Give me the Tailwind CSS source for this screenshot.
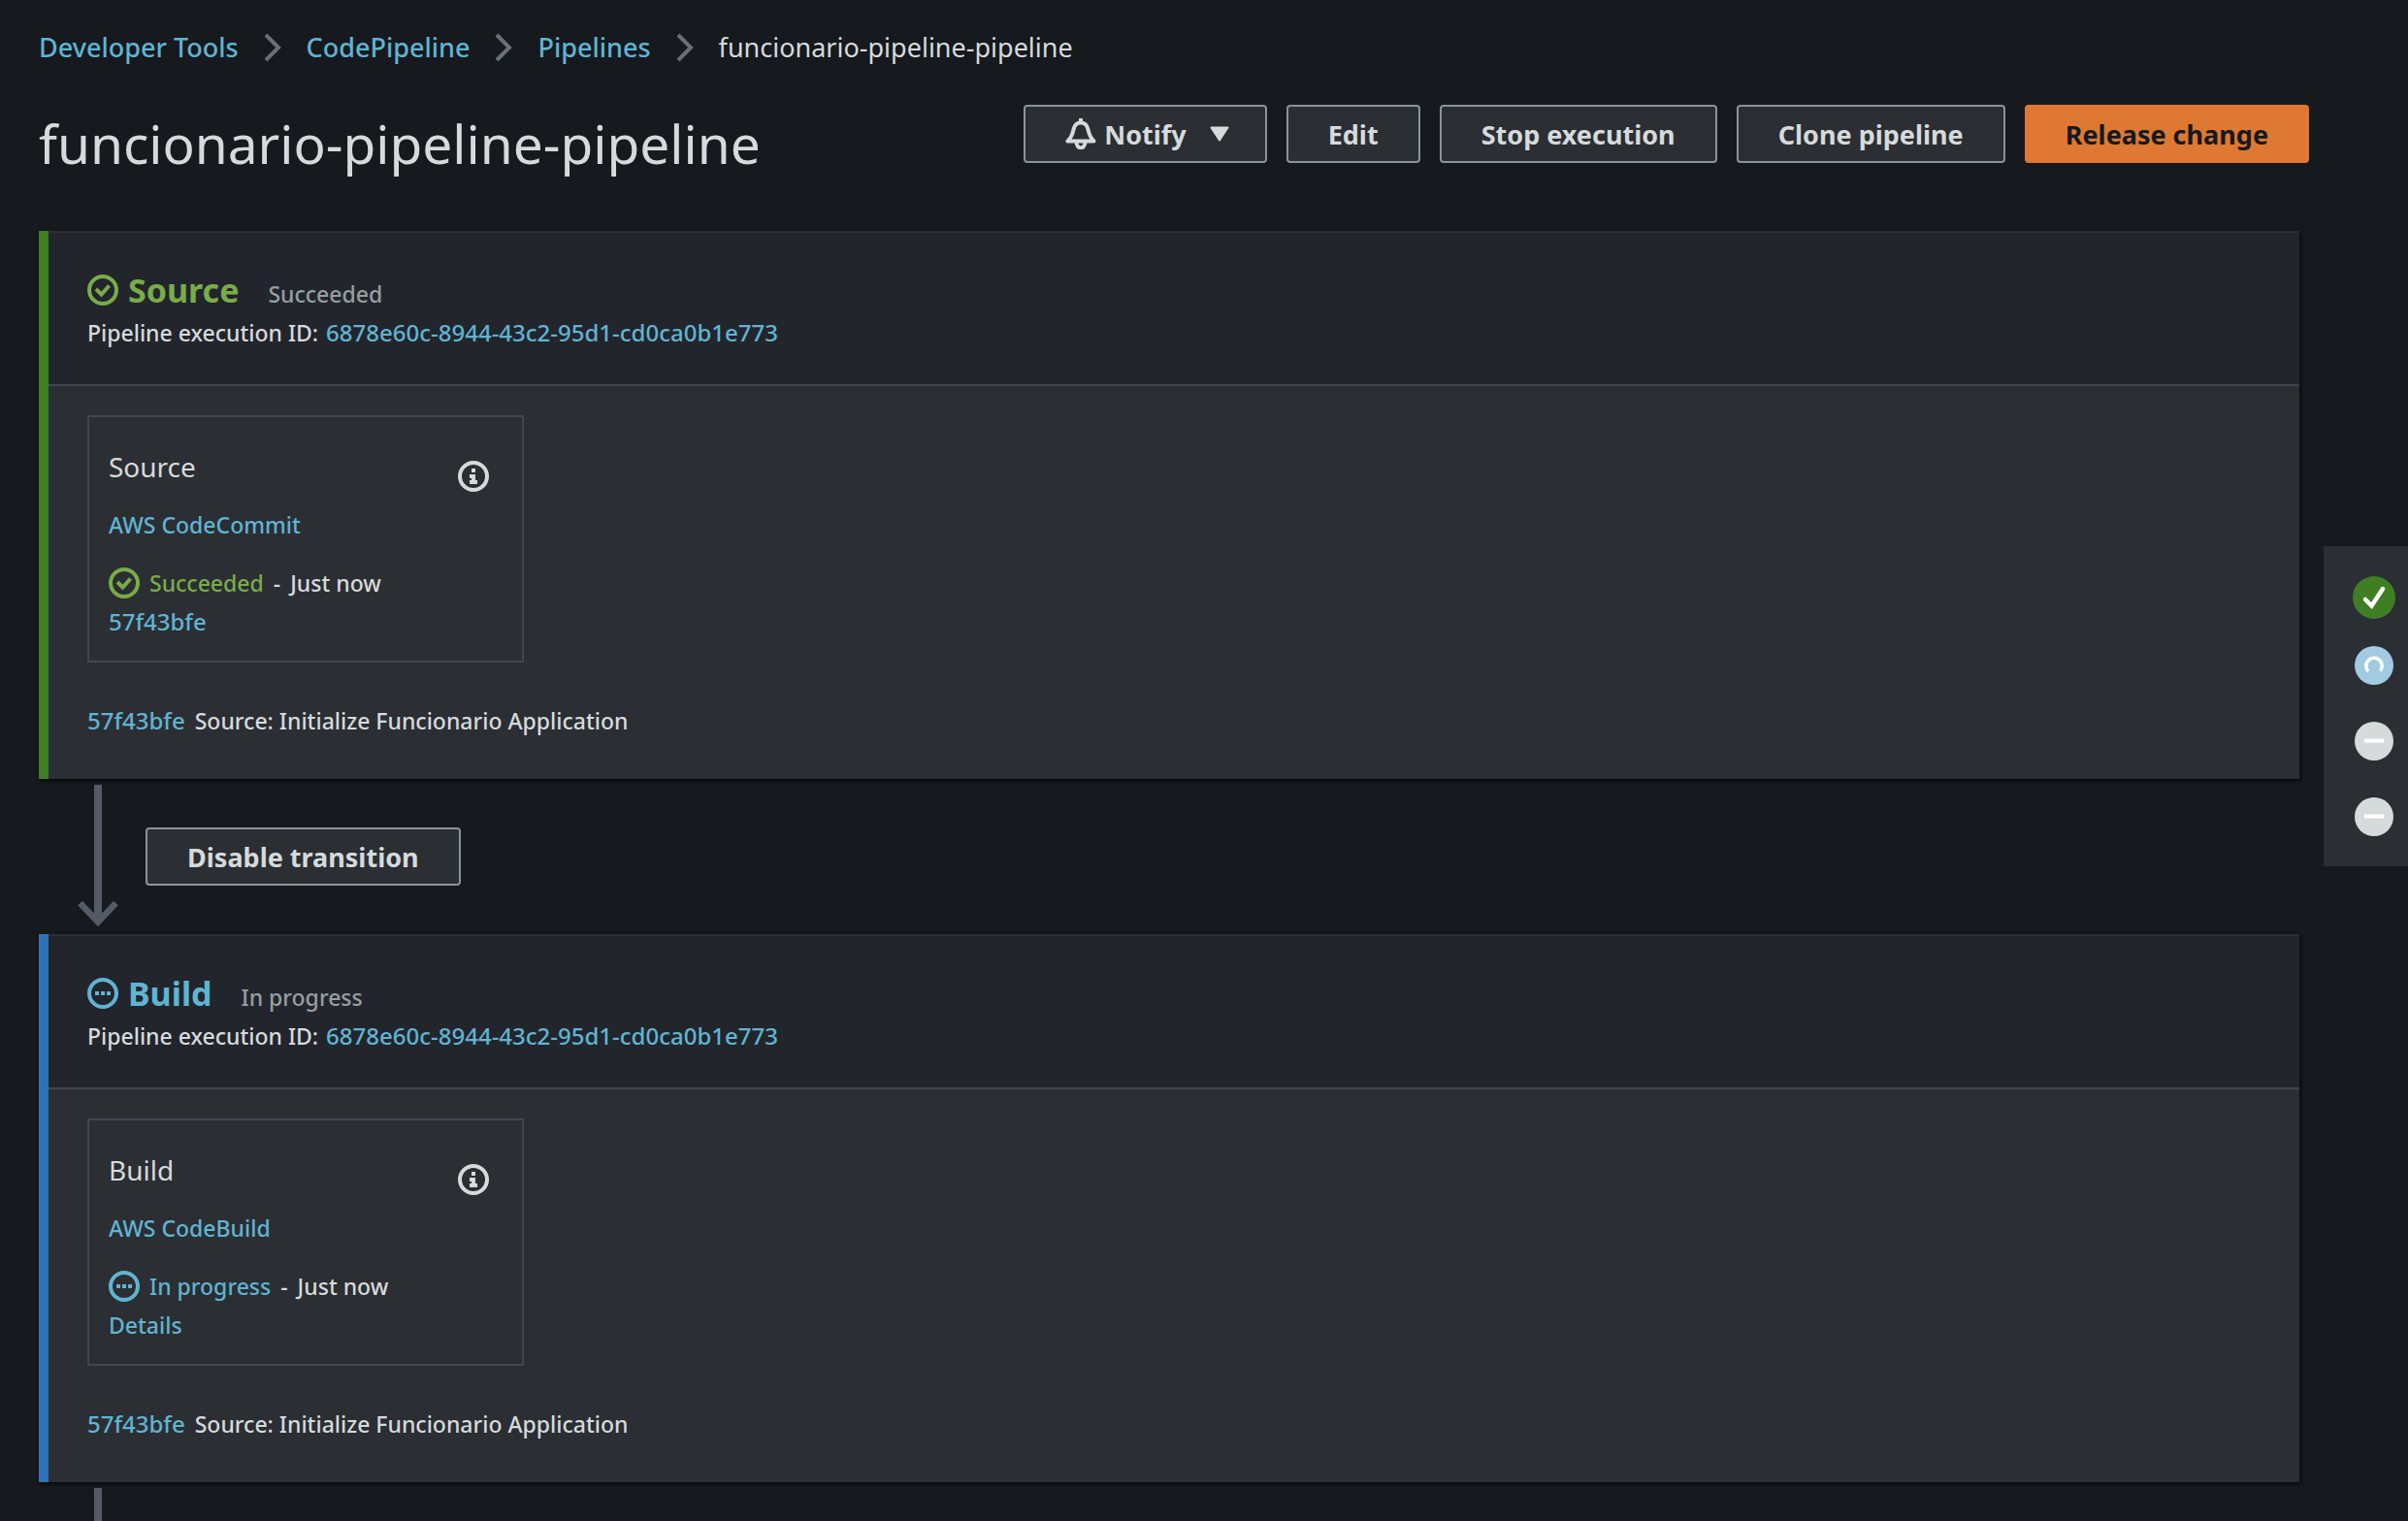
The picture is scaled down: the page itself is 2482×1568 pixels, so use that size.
<!DOCTYPE html>
<html lang="en">
<head>
<meta charset="utf-8">
<meta name="viewport" content="width=device-width, initial-scale=1">
<title>funcionario-pipeline-pipeline | CodePipeline</title>
<script src="https://cdn.jsdelivr.net/npm/@tailwindcss/browser@4"></script>
</head>
<body class="bg-[#16191e] font-['Noto_Sans','Open_Sans',sans-serif] text-[23px] leading-10 font-medium text-[#d5dbdb]">
<svg class="hidden" aria-hidden="true">
  <symbol id="chevron" viewBox="0 0 18 30"><path d="M2 2l13 13L2 28" fill="none" stroke="#687078" stroke-width="4"/></symbol>
  <symbol id="check-circle" viewBox="0 0 32 32"><circle cx="16" cy="16" r="14" fill="none" stroke="currentColor" stroke-width="4"/><path d="M9 15l5.500 5.500L22.500 11.500" fill="none" stroke="currentColor" stroke-width="4"/></symbol>
  <symbol id="progress-circle" viewBox="0 0 32 32"><circle cx="16" cy="16" r="14" fill="none" stroke="currentColor" stroke-width="4"/><path d="M8 14h4v4H8zM14 14h4v4h-4zM20 14h4v4h-4z" fill="currentColor"/></symbol>
  <symbol id="info-circle" viewBox="0 0 32 32"><circle cx="16" cy="16" r="14" fill="none" stroke="currentColor" stroke-width="4"/><path d="M14 8h4v4h-4zM12 14h6v6h2v4h-8v-4h2v-2h-2z" fill="currentColor"/></symbol>
</svg>
<div class="flex min-h-screen flex-col">
  <nav aria-label="Breadcrumb" class="pt-[29px] pl-10">
    <ol class="flex items-center gap-[26px] text-[27px]">
      <li><a href="#" class="text-[#60b4d2]">Developer Tools</a></li>
      <li aria-hidden="true"><svg class="h-[30px] w-[18px]"><use href="#chevron"/></svg></li>
      <li><a href="#" class="text-[#60b4d2]">CodePipeline</a></li>
      <li aria-hidden="true"><svg class="h-[30px] w-[18px]"><use href="#chevron"/></svg></li>
      <li><a href="#" class="text-[#60b4d2]">Pipelines</a></li>
      <li aria-hidden="true"><svg class="h-[30px] w-[18px]"><use href="#chevron"/></svg></li>
      <li aria-current="page" class="font-normal">funcionario-pipeline-pipeline</li>
    </ol>
  </nav>

  <header class="flex items-start justify-between pt-[39px] pr-[102px] pb-[54px] pl-10">
    <h1 class="mt-1 text-[55px] leading-[72px] font-normal">funcionario-pipeline-pipeline</h1>
    <div class="flex gap-5 text-[27px] font-bold">
      <button type="button" class="flex h-[60px] items-center rounded-sm border-2 border-[#879596] bg-[#2b2e33] pr-[37px] pl-[41px]">
        <svg class="size-8" viewBox="0 0 32 32" fill="none" stroke="currentColor" stroke-width="4" stroke-linejoin="round"><path d="M16 0v4"/><path d="M2.500 23.500h27C25 19 24.500 16 23.500 11.500 22.500 7 20 4.500 16 4.500S9.500 7 8.500 11.500C7.500 16 7 19 2.500 23.500z"/><path d="M11.500 24c0 8.500 9 8.500 9 0"/></svg>
        <span class="ml-2 pt-0.5">Notify</span>
        <svg class="ml-6 h-4 w-5" viewBox="0 0 20 16"><path d="M1.500 1.500h17L10 14.500z" fill="currentColor" stroke="currentColor" stroke-width="2" stroke-linejoin="round"/></svg>
      </button>
      <button type="button" class="h-[60px] rounded-sm border-2 border-[#879596] bg-[#2b2e33] px-[41px] pt-0.5">Edit</button>
      <button type="button" class="h-[60px] rounded-sm border-2 border-[#879596] bg-[#2b2e33] px-[41px] pt-0.5">Stop execution</button>
      <button type="button" class="h-[60px] rounded-sm border-2 border-[#879596] bg-[#2b2e33] px-[41px] pt-0.5">Clone pipeline</button>
      <button type="button" class="h-[60px] rounded-sm border-2 border-[#de7832] bg-[#de7832] px-10 pt-0.5 text-[#16191e]">Release change</button>
    </div>
  </header>

  <div class="flex flex-1 gap-[25px] pl-10">
    <main class="flex flex-1 flex-col">
      <section class="border-l-10 border-[#3f7e23] bg-[#2b2e33] shadow-[1px_2px_4px_rgba(0,0,0,0.7)]">
        <div class="border-t-2 border-b-2 border-t-[#2b2e33] border-b-[#414750] bg-[#22252c] pt-[39px] pb-[33px] pl-10">
          <div class="flex h-10 items-start gap-[30px]">
            <h2 class="flex items-center gap-[10px] text-[34px] leading-10 font-bold text-[#79ac48]"><svg class="size-8"><use href="#check-circle"/></svg>Source</h2>
            <span class="pt-1 text-[#95a0a1]">Succeeded</span>
          </div>
          <p class="mt-1 flex h-10 items-baseline gap-2">Pipeline execution ID: <a href="#" class="text-[24px] text-[#60b4d2]">6878e60c-8944-43c2-95d1-cd0ca0b1e773</a></p>
        </div>
        <div class="pt-[30px] pb-10 pl-10">
          <article class="w-[450px] border-2 border-[#414750] px-5 pt-[31px] pb-5">
            <div class="flex h-10 items-start justify-between pr-[14px]">
              <h3 class="text-[28px] font-normal">Source</h3>
              <button type="button" aria-label="Source details" class="mt-[14px]"><svg class="size-8"><use href="#info-circle"/></svg></button>
            </div>
            <p class="mt-5"><a href="#" class="text-[#60b4d2]">AWS CodeCommit</a></p>
            <p class="mt-5 flex items-center gap-[10px]"><svg class="size-8 text-[#79ac48]"><use href="#check-circle"/></svg><span class="text-[#79ac48]">Succeeded</span><span>-</span><span>Just now</span></p>
            <p><a href="#" class="block text-[24px] text-[#60b4d2]">57f43bfe</a></p>
          </article>
          <p class="mt-10 flex h-10 items-baseline gap-[10px]"><a href="#" class="text-[24px] text-[#60b4d2]">57f43bfe</a>Source: Initialize Funcionario Application</p>
        </div>
      </section>

      <div class="flex h-40 items-center gap-7 pl-10">
        <svg class="h-[148px] w-[42px]" viewBox="0 0 42 148" aria-hidden="true"><path d="M21 0v136" stroke="#545b64" stroke-width="8"/><path d="M2.500 122L21 141.500 39.500 122" fill="none" stroke="#545b64" stroke-width="6.500"/></svg>
        <button type="button" class="h-[60px] rounded-sm border-2 border-[#879596] bg-[#2b2e33] px-[41px] pt-0.5 text-[27px] font-bold">Disable transition</button>
      </div>

      <section class="border-l-10 border-[#2e73b8] bg-[#2b2e33] shadow-[1px_2px_4px_rgba(0,0,0,0.7)]">
        <div class="border-t-2 border-b-2 border-t-[#2b2e33] border-b-[#414750] bg-[#22252c] pt-[39px] pb-[33px] pl-10">
          <div class="flex h-10 items-start gap-[30px]">
            <h2 class="flex items-center gap-[10px] text-[34px] leading-10 font-bold text-[#60b4d2]"><svg class="size-8"><use href="#progress-circle"/></svg>Build</h2>
            <span class="pt-1 text-[#95a0a1]">In progress</span>
          </div>
          <p class="mt-1 flex h-10 items-baseline gap-2">Pipeline execution ID: <a href="#" class="text-[24px] text-[#60b4d2]">6878e60c-8944-43c2-95d1-cd0ca0b1e773</a></p>
        </div>
        <div class="pt-[30px] pb-10 pl-10">
          <article class="w-[450px] border-2 border-[#414750] px-5 pt-[31px] pb-5">
            <div class="flex h-10 items-start justify-between pr-[14px]">
              <h3 class="text-[28px] font-normal">Build</h3>
              <button type="button" aria-label="Build details" class="mt-[14px]"><svg class="size-8"><use href="#info-circle"/></svg></button>
            </div>
            <p class="mt-5"><a href="#" class="text-[#60b4d2]">AWS CodeBuild</a></p>
            <p class="mt-5 flex items-center gap-[10px]"><svg class="size-8 text-[#60b4d2]"><use href="#progress-circle"/></svg><span class="text-[#60b4d2]">In progress</span><span>-</span><span>Just now</span></p>
            <p><a href="#" class="block text-[#60b4d2]">Details</a></p>
          </article>
          <p class="mt-10 flex h-10 items-baseline gap-[10px]"><a href="#" class="text-[24px] text-[#60b4d2]">57f43bfe</a>Source: Initialize Funcionario Application</p>
        </div>
      </section>

      <!-- Connector running on to the next stage -->
      <div class="flex flex-1 pt-[6px] pl-[57px]"><div class="w-2 bg-[#545b64]"></div></div>
    </main>

    <aside aria-label="Stage status" class="mt-[325px] flex w-[87px] flex-col items-center self-start bg-[#2b2e33] py-[31px] pl-[17px]">
      <svg class="size-11" viewBox="0 0 44 44"><circle cx="22" cy="22" r="22" fill="#3f7e23"/><path d="M13 24l6.500 6.500L31 13" fill="none" stroke="#fff" stroke-width="4.500" stroke-linecap="round"/></svg>
      <svg class="mt-7 size-10" viewBox="0 0 40 40"><circle cx="20" cy="20" r="20" fill="#a2cae1"/><path d="M14 26a8.200 8.200 0 1 1 12.500-.5" fill="none" stroke="#fff" stroke-width="3.500"/></svg>
      <svg class="mt-[38px] size-10" viewBox="0 0 40 40"><circle cx="20" cy="20" r="20" fill="#d5dbdb"/><path d="M12 19.500h16" stroke="#fff" stroke-width="4" stroke-linecap="square"/></svg>
      <svg class="mt-[38px] size-10" viewBox="0 0 40 40"><circle cx="20" cy="20" r="20" fill="#d5dbdb"/><path d="M12 19.500h16" stroke="#fff" stroke-width="4" stroke-linecap="square"/></svg>
    </aside>
  </div>
</div>
</body>
</html>
